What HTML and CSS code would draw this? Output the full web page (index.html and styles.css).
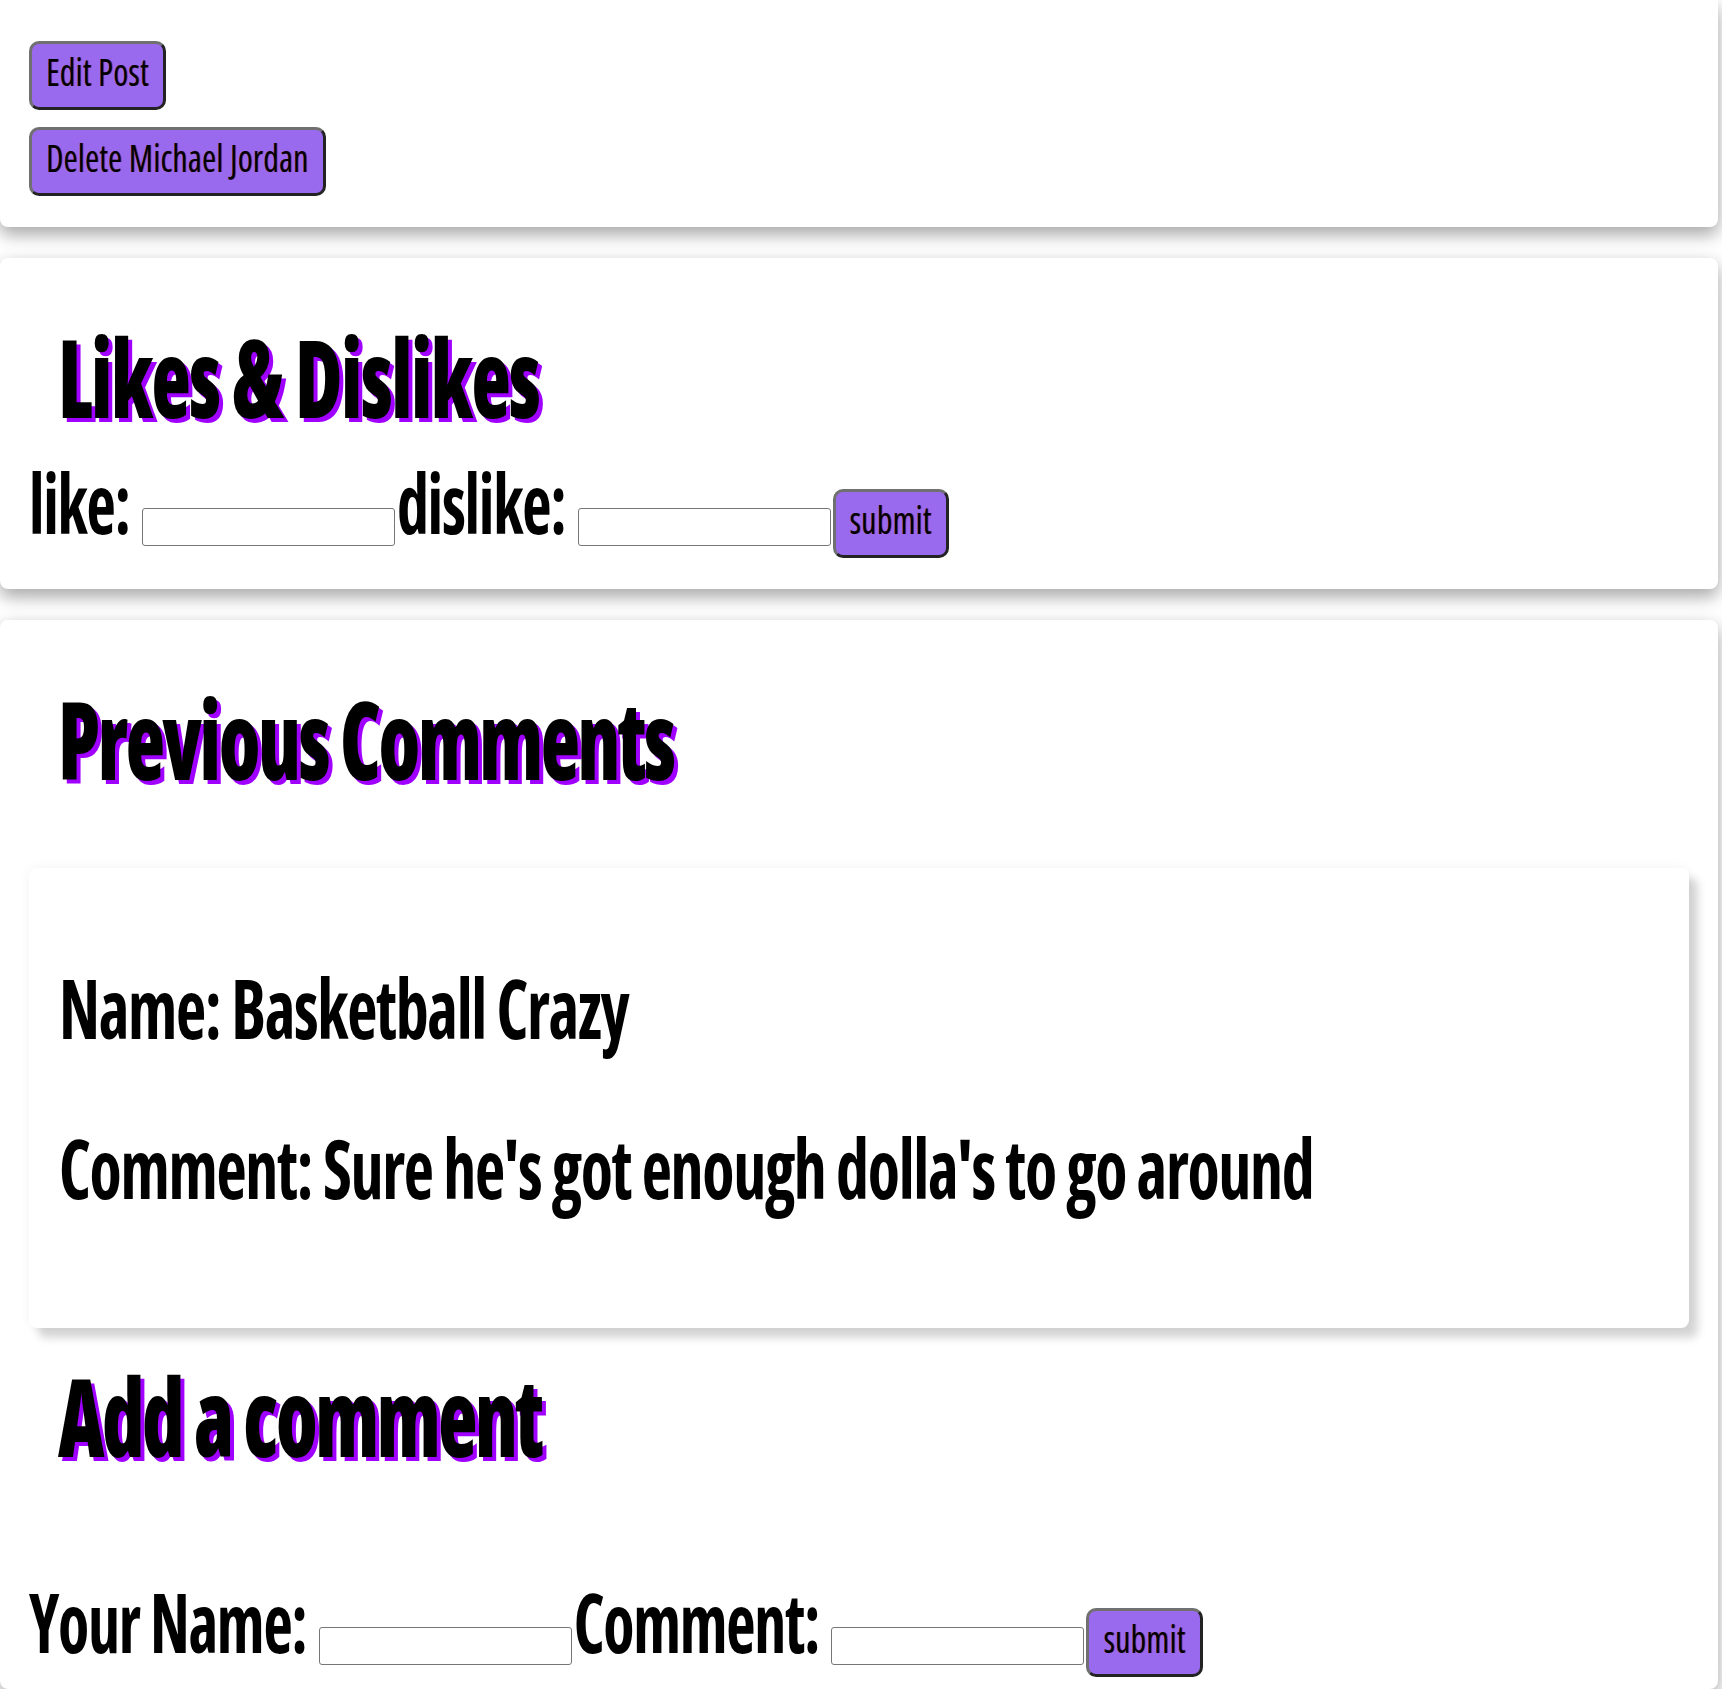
FILE: index.html
```html
<!DOCTYPE html>
<html lang="en">
<head>
<meta charset="utf-8">
<title>Michael Jordan</title>
<link rel="stylesheet" href="styles.css">
</head>
<body>
<div class="page">
  <section class="card card-top">
    <button class="btn btn-block" type="button"><span class="btn-text">Edit Post</span></button>
    <button class="btn btn-block" type="button"><span class="btn-text">Delete Michael Jordan</span></button>
  </section>

  <section class="card">
    <h1 class="title title-likes">Likes &amp; Dislikes</h1>
    <form class="row">
      <label class="field-label">like:</label><input class="field" type="text">
      <label class="field-label">dislike:</label><input class="field" type="text">
      <button class="btn" type="button"><span class="btn-text">submit</span></button>
    </form>
  </section>

  <section class="card card-last">
    <h1 class="title">Previous Comments</h1>
    <div class="comment">
      <p class="comment-line">Name: Basketball Crazy</p>
      <p class="comment-line">Comment: Sure he's got enough dolla's to go around</p>
    </div>
    <h1 class="title title-add">Add a comment</h1>
    <form class="row row-add">
      <label class="field-label">Your Name:</label><input class="field" type="text">
      <label class="field-label">Comment:</label><input class="field" type="text">
      <button class="btn" type="button"><span class="btn-text">submit</span></button>
    </form>
  </section>
</div>
</body>
</html>
```

FILE: styles.css
```css
html, body {
  margin: 0;
  padding: 0;
  background: #ffffff;
}

body {
  font-family: "Open Sans", "Roboto", sans-serif;
  font-stretch: 75%;
  color: #000;
}

.page {
  margin-right: 4px;
}

/* ---------- cards ---------- */
.card {
  background: #fff;
  border-radius: 8px;
  box-shadow: 0 8px 16px 0 rgba(0, 0, 0, 0.2), 0 6px 20px 0 rgba(0, 0, 0, 0.19);
  padding: 69px 29px 31px 29px;
  margin-bottom: 31px;
}

.card-top {
  border-radius: 0 0 8px 8px;
  padding-top: 41px;
}

.card-last {
  margin-bottom: 0;
  padding-bottom: 12px;
}

/* ---------- buttons ---------- */
.btn {
  font-family: "Open Sans", "Roboto", sans-serif;
  font-stretch: 75%;
  font-size: 34px;
  font-weight: 400;
  line-height: 46px;
  color: #000;
  background: #9a6aee;
  border: 3px solid;
  border-color: #707070 #232323 #232323 #707070;
  border-radius: 10px;
  padding: 6px 14px 11px 14px;
  text-shadow: 1px 0 0 rgba(140, 20, 20, 0.5);
  cursor: pointer;
}

.btn-text {
  display: inline-block;
  line-height: 46px;
  letter-spacing: 0.2px;
  transform: scaleY(1.1);
  transform-origin: 50% 36px;
}

.btn-block {
  display: block;
  margin: 0 0 17px 0;
}

.btn-block:last-child {
  margin-bottom: 0;
}

/* ---------- headings ---------- */
.title {
  margin: 0;
  padding-left: 29px;
  font-size: 81px;
  line-height: 120px;
  font-weight: 800;
  letter-spacing: -0.03em;
  text-shadow: 4px 3px 0 #a000ff;
  transform: scaleY(1.33);
  transform-origin: 0 91.4px;
}

.title-likes {
  margin-bottom: 22px;
  letter-spacing: -0.02em;
}

.title-add {
  margin-top: 38px;
}

/* ---------- form rows ---------- */
.row {
  display: flex;
  align-items: baseline;
  margin: 0;
}

.row-add {
  margin-top: 102px;
}

.field-label {
  font-size: 64px;
  line-height: 82px;
  font-weight: 700;
  letter-spacing: -0.02em;
  margin-right: 12px;
  transform: scaleY(1.3);
  transform-origin: 0 65.8px;
}

.field {
  box-sizing: border-box;
  width: 253px;
  height: 38px;
  font-family: "Open Sans", sans-serif;
  font-size: 20px;
  padding: 4px 6px;
  border: 1px solid #767676;
  border-radius: 3px;
  background: #fff;
  margin: 0 2px 0 0;
}

/* ---------- comment card ---------- */
.comment {
  margin-top: 59px;
  background: #fff;
  border-radius: 8px;
  padding: 104px 30px 114px 30px;
  box-shadow: 9px 10px 9px rgba(0, 0, 0, 0.16), 0 0 12px rgba(0, 0, 0, 0.05);
}

.comment-line {
  margin: 0;
  font-size: 66px;
  line-height: 82px;
  font-weight: 700;
  letter-spacing: -0.02em;
  transform: scaleY(1.26);
  transform-origin: 0 66.6px;
}

.comment-line + .comment-line {
  margin-top: 78px;
}
```
